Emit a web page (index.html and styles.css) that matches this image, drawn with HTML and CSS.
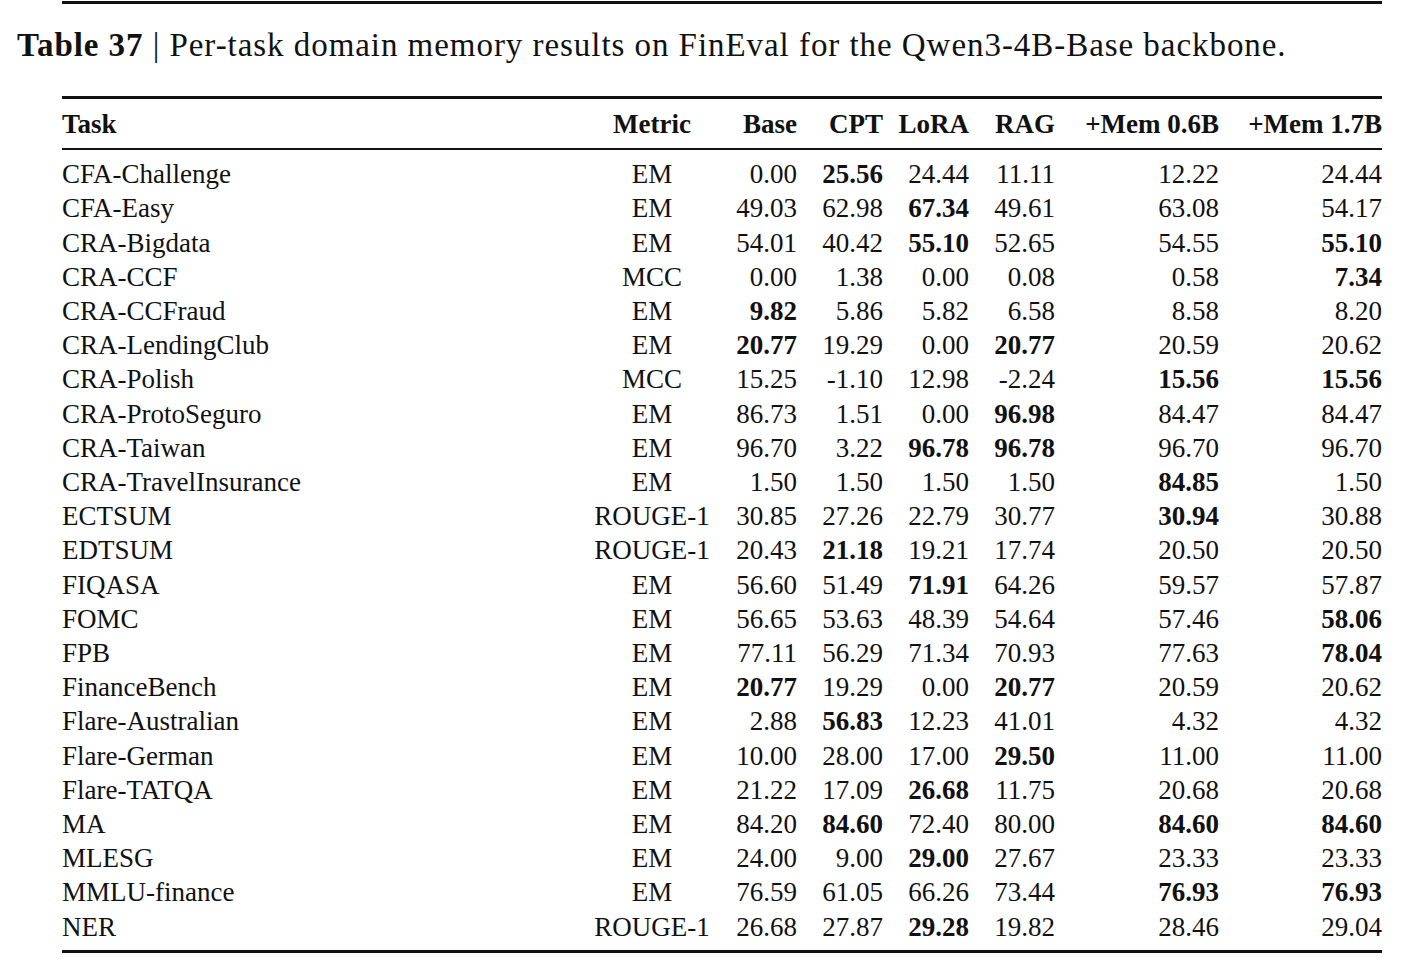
FILE: index.html
```html
<!DOCTYPE html>
<html lang="en">
<head>
    <meta charset="UTF-8">
    <title>Table 37</title>
    <link rel="stylesheet" href="styles.css">
</head>
<body>
    <div class="page-rule"></div>
    <p class="caption"><b>Table 37</b> | Per-task domain memory results on FinEval for the Qwen3-4B-Base backbone.</p>

    <table class="results">
        <colgroup>
            <col class="c-task">
            <col class="c-metric">
            <col class="c-base">
            <col class="c-num">
            <col class="c-num">
            <col class="c-num">
            <col class="c-mem">
            <col class="c-mem2">
        </colgroup>
        <thead>
            <tr>
                <th class="left">Task</th>
                <th class="center">Metric</th>
                <th>Base</th>
                <th>CPT</th>
                <th>LoRA</th>
                <th>RAG</th>
                <th>+Mem 0.6B</th>
                <th>+Mem 1.7B</th>
            </tr>
        </thead>
        <tbody>
            <tr><td class="left">CFA-Challenge</td><td class="center">EM</td><td>0.00</td><td><b>25.56</b></td><td>24.44</td><td>11.11</td><td>12.22</td><td>24.44</td></tr>
            <tr><td class="left">CFA-Easy</td><td class="center">EM</td><td>49.03</td><td>62.98</td><td><b>67.34</b></td><td>49.61</td><td>63.08</td><td>54.17</td></tr>
            <tr><td class="left">CRA-Bigdata</td><td class="center">EM</td><td>54.01</td><td>40.42</td><td><b>55.10</b></td><td>52.65</td><td>54.55</td><td><b>55.10</b></td></tr>
            <tr><td class="left">CRA-CCF</td><td class="center">MCC</td><td>0.00</td><td>1.38</td><td>0.00</td><td>0.08</td><td>0.58</td><td><b>7.34</b></td></tr>
            <tr><td class="left">CRA-CCFraud</td><td class="center">EM</td><td><b>9.82</b></td><td>5.86</td><td>5.82</td><td>6.58</td><td>8.58</td><td>8.20</td></tr>
            <tr><td class="left">CRA-LendingClub</td><td class="center">EM</td><td><b>20.77</b></td><td>19.29</td><td>0.00</td><td><b>20.77</b></td><td>20.59</td><td>20.62</td></tr>
            <tr><td class="left">CRA-Polish</td><td class="center">MCC</td><td>15.25</td><td>-1.10</td><td>12.98</td><td>-2.24</td><td><b>15.56</b></td><td><b>15.56</b></td></tr>
            <tr><td class="left">CRA-ProtoSeguro</td><td class="center">EM</td><td>86.73</td><td>1.51</td><td>0.00</td><td><b>96.98</b></td><td>84.47</td><td>84.47</td></tr>
            <tr><td class="left">CRA-Taiwan</td><td class="center">EM</td><td>96.70</td><td>3.22</td><td><b>96.78</b></td><td><b>96.78</b></td><td>96.70</td><td>96.70</td></tr>
            <tr><td class="left">CRA-TravelInsurance</td><td class="center">EM</td><td>1.50</td><td>1.50</td><td>1.50</td><td>1.50</td><td><b>84.85</b></td><td>1.50</td></tr>
            <tr><td class="left">ECTSUM</td><td class="center">ROUGE-1</td><td>30.85</td><td>27.26</td><td>22.79</td><td>30.77</td><td><b>30.94</b></td><td>30.88</td></tr>
            <tr><td class="left">EDTSUM</td><td class="center">ROUGE-1</td><td>20.43</td><td><b>21.18</b></td><td>19.21</td><td>17.74</td><td>20.50</td><td>20.50</td></tr>
            <tr><td class="left">FIQASA</td><td class="center">EM</td><td>56.60</td><td>51.49</td><td><b>71.91</b></td><td>64.26</td><td>59.57</td><td>57.87</td></tr>
            <tr><td class="left">FOMC</td><td class="center">EM</td><td>56.65</td><td>53.63</td><td>48.39</td><td>54.64</td><td>57.46</td><td><b>58.06</b></td></tr>
            <tr><td class="left">FPB</td><td class="center">EM</td><td>77.11</td><td>56.29</td><td>71.34</td><td>70.93</td><td>77.63</td><td><b>78.04</b></td></tr>
            <tr><td class="left">FinanceBench</td><td class="center">EM</td><td><b>20.77</b></td><td>19.29</td><td>0.00</td><td><b>20.77</b></td><td>20.59</td><td>20.62</td></tr>
            <tr><td class="left">Flare-Australian</td><td class="center">EM</td><td>2.88</td><td><b>56.83</b></td><td>12.23</td><td>41.01</td><td>4.32</td><td>4.32</td></tr>
            <tr><td class="left">Flare-German</td><td class="center">EM</td><td>10.00</td><td>28.00</td><td>17.00</td><td><b>29.50</b></td><td>11.00</td><td>11.00</td></tr>
            <tr><td class="left">Flare-TATQA</td><td class="center">EM</td><td>21.22</td><td>17.09</td><td><b>26.68</b></td><td>11.75</td><td>20.68</td><td>20.68</td></tr>
            <tr><td class="left">MA</td><td class="center">EM</td><td>84.20</td><td><b>84.60</b></td><td>72.40</td><td>80.00</td><td><b>84.60</b></td><td><b>84.60</b></td></tr>
            <tr><td class="left">MLESG</td><td class="center">EM</td><td>24.00</td><td>9.00</td><td><b>29.00</b></td><td>27.67</td><td>23.33</td><td>23.33</td></tr>
            <tr><td class="left">MMLU-finance</td><td class="center">EM</td><td>76.59</td><td>61.05</td><td>66.26</td><td>73.44</td><td><b>76.93</b></td><td><b>76.93</b></td></tr>
            <tr><td class="left">NER</td><td class="center">ROUGE-1</td><td>26.68</td><td>27.87</td><td><b>29.28</b></td><td>19.82</td><td>28.46</td><td>29.04</td></tr>
        </tbody>
    </table>
</body>
</html>
```

FILE: styles.css
```css
body {
    font-family: "Liberation Serif", "Times New Roman", serif;
    color: #111;
    background: #fff;
    margin: 0;
    padding: 0;
}

.page-rule {
    margin: 1px 0 0 62px;
    width: 1320px;
    border-top: 3px solid #111;
}

.caption {
    margin: 21px 0 0 17px;
    font-size: 33px;
    line-height: 40px;
    letter-spacing: 0.95px;
}

.results {
    margin: 31px 0 0 62px;
    width: 1320px;
    table-layout: fixed;
    border-collapse: collapse;
    font-size: 27px;
    border-top: 3px solid #111;
    border-bottom: 3px solid #111;
}

.c-task { width: 528px; }
.c-metric { width: 124px; }
.c-base { width: 83px; }
.c-num { width: 86px; }
.c-mem { width: 164px; }
.c-mem2 { width: 163px; }

.results th,
.results td {
    padding: 0;
    text-align: right;
    white-space: nowrap;
    line-height: 34.2px;
}

.results th {
    padding: 8px 0 7px;
    border-bottom: 2px solid #111;
}

.results tbody tr:first-child td { padding-top: 7px; }
.results tbody tr:last-child td { padding-bottom: 6px; }

.results .left { text-align: left; }
.results .center { text-align: center; }
```
